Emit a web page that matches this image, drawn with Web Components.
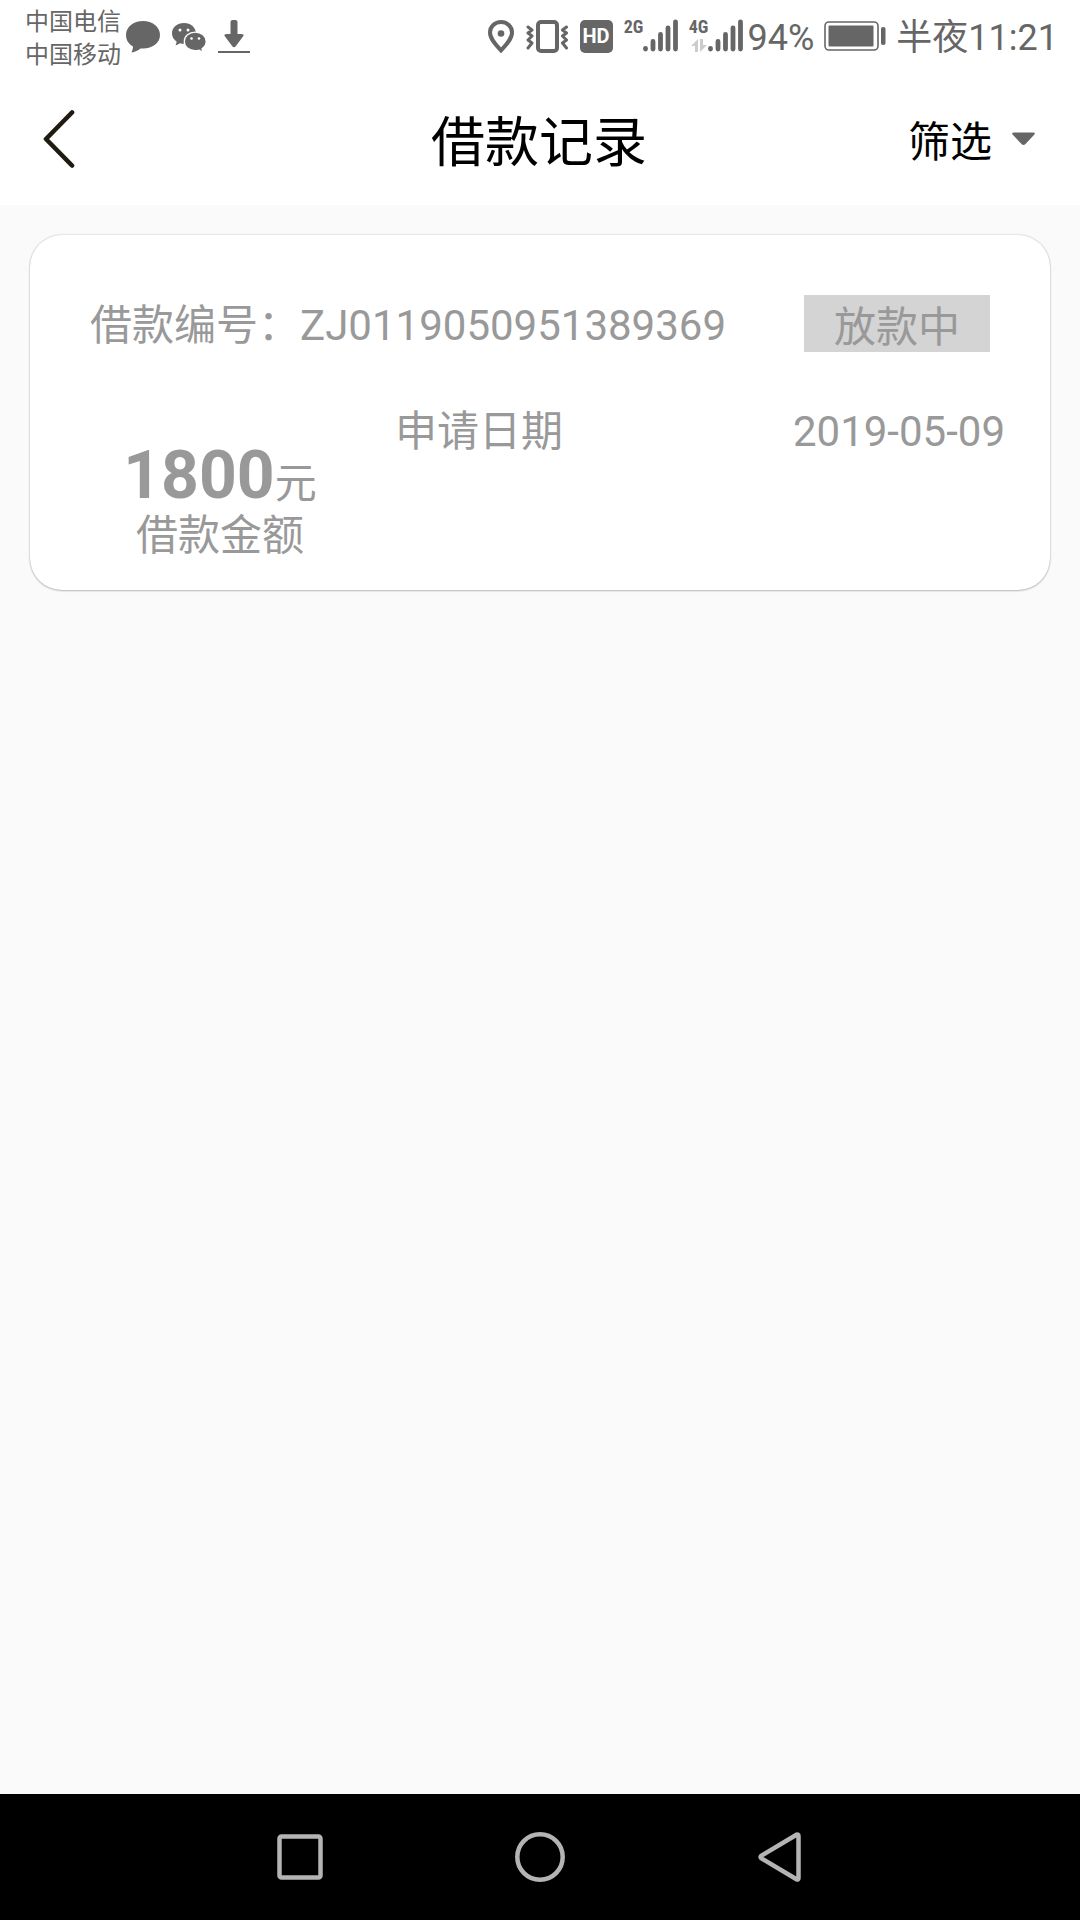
<!DOCTYPE html>
<html lang="zh-CN">
<head>
<meta charset="UTF-8">
<meta name="viewport" content="width=device-width, initial-scale=1">
<title>借款记录</title>
<style>
  body {
    margin: 0;
    min-height: 100vh;
    display: flex;
    flex-direction: column;
    background: #fafafa;
    --latin: Roboto, "Noto Sans CJK SC", sans-serif;
    --cjk: "Noto Sans CJK SC", Roboto, sans-serif;
    font-family: var(--latin);
  }
  main {
    flex: 1;
    padding: 30px;
  }
</style>
</head>
<body>
<status-bar percent="94%" time="半夜11:21">
  <span slot="carrier">中国电信</span>
  <span slot="carrier">中国移动</span>
</status-bar>
<page-header>
  借款记录
  <span slot="action">筛选</span>
</page-header>
<main>
  <loan-card>
    <span slot="number">ZJ0119050951389369</span>
    <span slot="status">放款中</span>
    <span slot="amount">1800</span>
    <span slot="date">2019-05-09</span>
  </loan-card>
</main>
<nav-bar></nav-bar>

<script>
const icons = {
  chat: [34, 34, `<path fill="currentColor" d="M17 2C7.500 2 0 8 0 16c0 5 2.500 9 7 11.500 0 2-.5 4-1.500 6 3.500-.5 6.500-2 9-4h2.500c9.500 0 17-5.500 17-13.500S26.500 2 17 2z"/>`],
  wechat: [34, 34, `
    <path fill="currentColor" d="M12 4C5 4 0 8.500 0 14.500c0 3.500 2 6.300 4.700 8.200L3.600 26.500l4.600-2.300c1.300.4 2.500.5 3.800.5 7 0 12-4.500 12-10.200S19 4 12 4z"/>
    <path fill="currentColor" stroke="#fff" stroke-width="1.300" d="M23.200 13.200c-6.200 0-10.900 4-10.900 9.300 0 5.200 4.700 9.200 10.900 9.200 1.300 0 2.600-.2 3.800-.6l4 2.200-1-3.500c2.600-1.800 4.200-4.300 4.200-7.300 0-5.300-4.800-9.300-11-9.300z"/>
    <g fill="#fff"><circle cx="8" cy="11" r="1.500"/><circle cx="16" cy="11" r="1.500"/><circle cx="19.500" cy="19.500" r="1.300"/><circle cx="27" cy="19.500" r="1.300"/></g>`],
  download: [32, 34, `<path fill="currentColor" d="M12.500 3q0-2 2-2h3q2 0 2 2v12H23q4 0 2 2.500L17.500 27.500q-1.500 1.500-3 0L7 17.500Q5 15 9 15h3.500zM0 32h32v2H0z"/>`],
  pin: [26, 34, `
    <path fill="none" stroke="currentColor" stroke-width="4" d="M13 3C7 3 2 7.500 2 13.500 2 20 8 26 13 31.500 18 26 24 20 24 13.500 24 7.500 19 3 13 3z"/>
    <circle cx="13" cy="14.500" r="3.300" fill="currentColor"/>`],
  vibrate: [42, 34, `
    <rect x="12" y="3" width="19" height="29" rx="3" fill="none" stroke="currentColor" stroke-width="4"/>
    <path fill="none" stroke="currentColor" stroke-width="3" stroke-linecap="round" stroke-linejoin="round" d="M2 8l4 3-4 3 4 3-4 4 4 3-4 5M40.500 8l-4 3 4 3-4 3 4 4-4 3 4 5"/>`],
  bars: [35, 34, `<path stroke="currentColor" stroke-width="4.800" stroke-linecap="round" d="M2.500 29.300v.8M10 22.500v7.600M17.500 15.500v14.600M25 9v21.100M32.500 2.800v27.300"/>`],
  data: [16, 14, `<path fill="#ccc" d="M7 13H4V7H0l7-7zM9 0h3v6h4l-7 7z"/>`],
  battery: [62, 30, `
    <rect x="1" y="1" width="53" height="28" rx="4" fill="none" stroke="currentColor" stroke-width="1.600"/>
    <rect x="4.500" y="4.500" width="45" height="21" rx="1" fill="currentColor"/>
    <rect x="57" y="6" width="4.500" height="18" rx="2" fill="currentColor"/>`],
  back: [32, 60, `<path fill="none" stroke="#1f1b10" stroke-width="4.600" stroke-linecap="round" stroke-linejoin="round" d="M29 3.500L3 30l26 26.500"/>`],
  caret: [23, 14, `<path fill="#666" d="M2 .5h19q3 0 1.200 2.300l-8.700 9.200q-2 2-4 0L.8 2.800Q-1 .5 2 .5z"/>`],
  square: [50, 50, `<rect x="4.500" y="4.500" width="41" height="41" rx="2" fill="none" stroke="currentColor" stroke-width="4.500"/>`],
  circle: [50, 50, `<circle cx="25" cy="25" r="22.700" fill="none" stroke="currentColor" stroke-width="4.500"/>`],
  triangle: [50, 50, `<path fill="none" stroke="currentColor" stroke-width="4.500" stroke-linejoin="round" d="M43.500 4q0-2-2-1.300L6.500 23.600q-2 1.400 0 2.800l35 20.900q2 .7 2-1.300z"/>`]
};

class UiIcon extends HTMLElement {
  connectedCallback() {
    const [w, h, shape] = icons[this.getAttribute('name')];
    this.attachShadow({ mode: 'open' });
    this.shadowRoot.innerHTML = `
      <style>
        :host { display: block; flex: none; }
        svg { display: block; }
      </style>
      <svg width="${w}" height="${h}" viewBox="0 0 ${w} ${h}" aria-hidden="true">${shape}</svg>
    `;
  }
}
customElements.define('ui-icon', UiIcon);

class SignalMeter extends HTMLElement {
  connectedCallback() {
    this.attachShadow({ mode: 'open' });
    this.shadowRoot.innerHTML = `
      <style>
        :host {
          display: flex;
          height: 34px;
        }
        .type {
          width: 18px;
          display: flex;
          flex-direction: column;
          align-items: center;
          gap: 4px;
          font: bold 18px/16px "Roboto Condensed", "Liberation Sans Narrow", Roboto, sans-serif;
        }
      </style>
      <div class="type">
        <slot></slot>
        ${this.hasAttribute('data') ? '<ui-icon name="data"></ui-icon>' : ''}
      </div>
      <ui-icon name="bars"></ui-icon>
    `;
  }
}
customElements.define('signal-meter', SignalMeter);

class StatusBar extends HTMLElement {
  connectedCallback() {
    this.attachShadow({ mode: 'open' });
    this.shadowRoot.innerHTML = `
      <style>
        :host {
          display: flex;
          align-items: center;
          justify-content: space-between;
          height: 72px;
          padding: 0 22px 0 25px;
          background: #fff;
          color: #666;
        }
        .side, .icons {
          display: flex;
          align-items: center;
        }
        .icons { gap: 12px; }
        .left { gap: 5px; }
        .right { gap: 10px; }
        .carriers {
          display: flex;
          flex-direction: column;
          font: 24px/33px var(--cjk);
        }
        .network {
          display: flex;
          align-items: center;
          gap: 5px;
        }
        .text {
          padding-top: 4px;
          font-size: 36px;
          line-height: 40px;
          white-space: nowrap;
        }
        .hd {
          width: 33px;
          border-radius: 5px;
          background: #666;
          color: #fff;
          font-size: 20px;
          font-weight: bold;
          line-height: 33px;
          text-align: center;
        }
      </style>
      <div class="side left">
        <div class="carriers"><slot name="carrier"></slot></div>
        <div class="icons">
          <ui-icon name="chat"></ui-icon>
          <ui-icon name="wechat"></ui-icon>
          <ui-icon name="download"></ui-icon>
        </div>
      </div>
      <div class="side right">
        <div class="network">
          <div class="icons">
            <ui-icon name="pin"></ui-icon>
            <ui-icon name="vibrate"></ui-icon>
            <div class="hd">HD</div>
            <signal-meter>2G</signal-meter>
            <signal-meter data>4G</signal-meter>
          </div>
          <div class="text">${this.getAttribute('percent')}</div>
        </div>
        <ui-icon name="battery"></ui-icon>
        <div class="text">${this.getAttribute('time')}</div>
      </div>
    `;
  }
}
customElements.define('status-bar', StatusBar);

class PageHeader extends HTMLElement {
  connectedCallback() {
    this.attachShadow({ mode: 'open' });
    this.shadowRoot.innerHTML = `
      <style>
        :host {
          display: grid;
          grid-template-columns: 1fr auto 1fr;
          align-items: center;
          height: 133px;
          padding: 0 45px 0 43px;
          background: #fff;
          color: #000;
          font-family: var(--cjk);
        }
        h1 {
          margin: 0;
          font-size: 54px;
          font-weight: 400;
          line-height: 80px;
        }
        button {
          display: flex;
          align-items: center;
          gap: 20px;
          padding: 0;
          border: 0;
          background: none;
          color: inherit;
          font: 42px/60px var(--cjk);
        }
        .back { justify-self: start; }
        .action { justify-self: end; }
      </style>
      <button class="back" aria-label="返回"><ui-icon name="back"></ui-icon></button>
      <h1><slot></slot></h1>
      <button class="action"><slot name="action"></slot><ui-icon name="caret"></ui-icon></button>
    `;
  }
}
customElements.define('page-header', PageHeader);

class LoanCard extends HTMLElement {
  connectedCallback() {
    this.attachShadow({ mode: 'open' });
    this.shadowRoot.innerHTML = `
      <style>
        :host {
          display: block;
          padding: 60px 45px 24px;
          border-radius: 32px;
          background: #fff;
          box-shadow: 0 0 2px rgba(0, 0, 0, 0.25), 0 1px 2px rgba(0, 0, 0, 0.2);
          color: #999;
          font-size: 42px;
          line-height: 60px;
        }
        .top {
          display: flex;
          justify-content: space-between;
          align-items: flex-start;
          padding: 0 15px;
        }
        .number { line-height: 62px; }
        .status {
          padding: 0 30px;
          background: #d4d4d4;
          font-family: var(--cjk);
          line-height: 57px;
        }
        .detail {
          display: grid;
          grid-template-columns: 290px 1fr;
          gap: 30px;
          margin-top: 45px;
        }
        .amount {
          padding-top: 44px;
          text-align: center;
        }
        .sum {
          font-size: 66px;
          height: 60px;
        }
        .sum small { font-size: 42px; }
        .date {
          display: flex;
          justify-content: space-between;
        }
      </style>
      <div class="top">
        <div class="number">借款编号：<slot name="number"></slot></div>
        <div class="status"><slot name="status"></slot></div>
      </div>
      <div class="detail">
        <div class="amount">
          <div class="sum"><b><slot name="amount"></slot></b><small>元</small></div>
          <div>借款金额</div>
        </div>
        <div class="date">
          <span>申请日期</span>
          <slot name="date"></slot>
        </div>
      </div>
    `;
  }
}
customElements.define('loan-card', LoanCard);

class NavBar extends HTMLElement {
  connectedCallback() {
    this.attachShadow({ mode: 'open' });
    this.shadowRoot.innerHTML = `
      <style>
        :host {
          display: flex;
          justify-content: center;
          height: 126px;
          background: #000;
        }
        button {
          width: 240px;
          display: flex;
          align-items: center;
          justify-content: center;
          padding: 0;
          border: 0;
          background: none;
          color: #b4b4b4;
        }
      </style>
      <button aria-label="最近任务"><ui-icon name="square"></ui-icon></button>
      <button aria-label="主页"><ui-icon name="circle"></ui-icon></button>
      <button aria-label="返回"><ui-icon name="triangle"></ui-icon></button>
    `;
  }
}
customElements.define('nav-bar', NavBar);
</script>
</body>
</html>
